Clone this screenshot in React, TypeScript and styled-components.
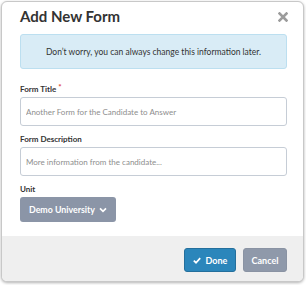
import React, { useState } from 'react';
import styled, { createGlobalStyle } from 'styled-components';

const GlobalStyle = createGlobalStyle`
  html, body {
    margin: 0;
    background: #ffffff;
    font-family: Lato, "Open Sans", sans-serif;
  }
  * {
    box-sizing: border-box;
  }
`;

const App = () => {
  const [title, setTitle] = useState('');
  const [description, setDescription] = useState('');

  return (
    <Page>
      <GlobalStyle />
      <Modal>
        <Header>
          <Title>Add New Form</Title>
          <Close aria-label="Close">
            <svg width="10" height="10" viewBox="0 0 10 10">
              <path d="M1.5 1.5 L8.5 8.5 M8.5 1.5 L1.5 8.5" stroke="#9c9c9c" strokeWidth="2.6" strokeLinecap="square" />
            </svg>
          </Close>
        </Header>

        <Body>
          <Alert>Don’t worry, you can always change this information later.</Alert>

          <Field>
            <Label>
              Form Title<Required>*</Required>
            </Label>
            <Input
              type="text"
              placeholder="Another Form for the Candidate to Answer"
              value={title}
              onChange={(e) => setTitle(e.target.value)}
            />
          </Field>

          <Field>
            <Label>Form Description</Label>
            <Input
              type="text"
              placeholder="More information from the candidate..."
              value={description}
              onChange={(e) => setDescription(e.target.value)}
            />
          </Field>

          <Field>
            <Label>Unit</Label>
            <Dropdown type="button">
              Demo University
              <svg width="8" height="6" viewBox="0 0 8 6">
                <path d="M1 1.3 L4 4.3 L7 1.3" fill="none" stroke="#ffffff" strokeWidth="1.7" />
              </svg>
            </Dropdown>
          </Field>
        </Body>

        <Footer>
          <Button primary type="button">
            <svg width="8" height="7" viewBox="0 0 8 7">
              <path d="M0.8 3.6 L3 5.7 L7.2 1.1" fill="none" stroke="#ffffff" strokeWidth="1.7" />
            </svg>
            Done
          </Button>
          <Button type="button">Cancel</Button>
        </Footer>
      </Modal>
    </Page>
  );
};

const Page = styled.div`
  padding: 1px 2px 3px 1px;
`;

const Modal = styled.div`
  width: 303px;
  border: 1px solid #c8c8c8;
  border-radius: 6px;
  background: #ffffff;
  box-shadow: 0 1px 3px rgba(0, 0, 0, 0.3);
  overflow: hidden;
`;

const Header = styled.div`
  display: flex;
  justify-content: space-between;
  align-items: flex-start;
  padding: 5px 15px 0 18px;
`;

const Title = styled.h2`
  margin: 0;
  font-size: 15px;
  line-height: 18px;
  font-weight: 700;
  color: #333333;
`;

const Close = styled.button`
  border: 0;
  background: none;
  padding: 0;
  margin-top: 5px;
  width: 10px;
  height: 10px;
  display: flex;
  cursor: pointer;
`;

const Body = styled.div`
  padding: 9px 16px 14px 18px;
  display: flex;
  flex-direction: column;
`;

const Alert = styled.div`
  height: 35px;
  display: flex;
  align-items: center;
  justify-content: center;
  background: #d9ecf6;
  border: 1px solid #bcdff0;
  border-radius: 3px;
  color: #333333;
  font-size: 8.5px;
  margin-bottom: 15px;
`;

const Field = styled.div`
  display: flex;
  flex-direction: column;
  margin-bottom: 8px;

  &:last-child {
    margin-bottom: 0;
  }
`;

const Label = styled.label`
  font-size: 8px;
  line-height: 10px;
  font-weight: 700;
  color: #333333;
  margin-bottom: 3px;
`;

const Required = styled.span`
  color: #e0413a;
  margin-left: 2px;
  position: relative;
  top: -2px;
`;

const Input = styled.input`
  height: 29px;
  width: 100%;
  border: 1px solid #c6cdd6;
  border-radius: 3px;
  padding: 0 5px;
  font-family: Lato, "Open Sans", sans-serif;
  font-size: 8px;
  color: #333333;

  &::placeholder {
    color: #8e8e8e;
  }
`;

const Dropdown = styled.button`
  align-self: flex-start;
  display: flex;
  align-items: center;
  justify-content: space-between;
  width: 96px;
  height: 25px;
  padding: 0 9px;
  border: 0;
  border-radius: 3px;
  background: #8b95a7;
  color: #ffffff;
  font-family: Lato, "Open Sans", sans-serif;
  font-size: 8.8px;
  font-weight: 700;
  white-space: nowrap;
`;

const Footer = styled.div`
  display: flex;
  justify-content: flex-end;
  gap: 7px;
  padding: 12px 16px 9px;
  background: #efefef;
`;

const Button = styled.button<{ primary?: boolean }>`
  display: flex;
  align-items: center;
  justify-content: center;
  gap: 5px;
  width: ${(p) => (p.primary ? '52px' : '44px')};
  height: 24px;
  padding: 0;
  border: 1px solid ${(p) => (p.primary ? '#246f9c' : '#8a93a3')};
  border-radius: 3px;
  background: ${(p) => (p.primary ? '#2b86bb' : '#8f99aa')};
  color: #ffffff;
  font-family: Lato, "Open Sans", sans-serif;
  font-size: 9px;
  font-weight: 700;
`;

export default App;
